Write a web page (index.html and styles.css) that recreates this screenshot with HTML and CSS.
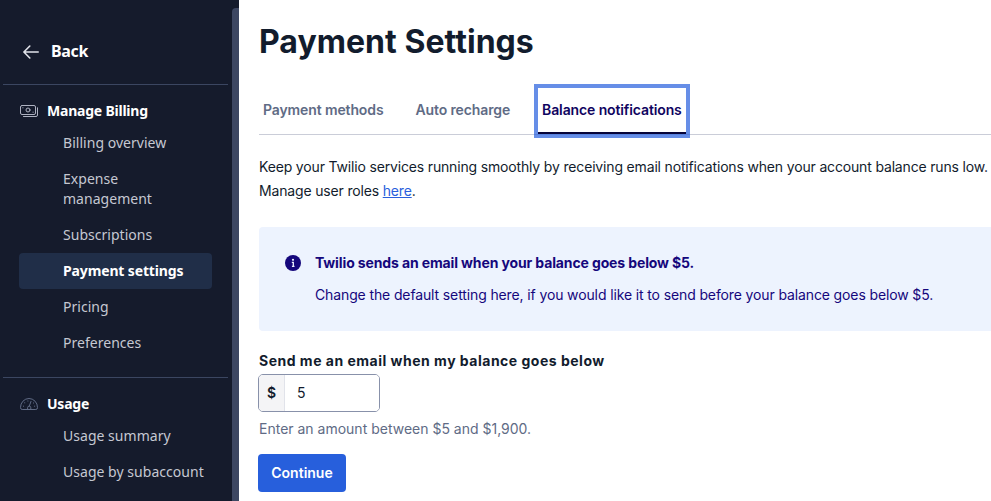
FILE: index.html
```html
<!DOCTYPE html>
<html lang="en">
<head>
    <meta charset="UTF-8">
    <meta name="viewport" content="width=device-width, initial-scale=1.0">
    <title>Payment Settings</title>
    <link rel="stylesheet" href="styles.css">
</head>
<body>
    <aside class="sidebar">
        <div class="sidebar-content">
            <a href="#" class="back">
                <svg class="back-icon" width="16" height="14" viewBox="0 0 16 14" fill="none" stroke="#e1e3ea" stroke-width="1.6" stroke-linecap="round" stroke-linejoin="round">
                    <path d="M15.2 7H1M6.8 1L0.9 7l5.9 6"/>
                </svg>
                <span>Back</span>
            </a>
            <nav class="nav-group billing">
                <h2 class="nav-title">
                    <svg class="nav-icon" width="18" height="12" viewBox="0 0 18 12" fill="none" stroke="#aeb2c1" stroke-linecap="round">
                        <rect x="0.5" y="0.5" width="15" height="9" rx="1.5"/>
                        <circle cx="8" cy="5" r="2"/>
                        <path d="M2.8 2.8h.2M13 7.2h.2M17.5 2.8v7.2q0 1.5-1.5 1.5H3.5"/>
                    </svg>
                    <span>Manage Billing</span>
                </h2>
                <a href="#">Billing overview</a>
                <a href="#">Expense<br>management</a>
                <a href="#">Subscriptions</a>
                <a href="#" class="active">Payment settings</a>
                <a href="#">Pricing</a>
                <a href="#">Preferences</a>
            </nav>
            <nav class="nav-group usage">
                <h2 class="nav-title">
                    <svg class="nav-icon" width="18" height="12" viewBox="0 0 18 12" fill="none" stroke="#606b85" stroke-linecap="round">
                        <path d="M1.8 11.5Q.5 11.5.5 9.5a8.5 9 0 0 1 17 0q0 2-1.3 2z"/>
                        <path d="M11 3.4L9.3 8M7.6 11v-1.3a1.6 1.6 0 0 1 3.2 0V11M3.4 8.2h.2M4.6 4.8h.2M7.8 3h.2M13.4 5h.2M14.5 8.2h.2"/>
                    </svg>
                    <span>Usage</span>
                </h2>
                <a href="#">Usage summary</a>
                <a href="#">Usage by subaccount</a>
            </nav>
        </div>
        <div class="scrollbar"></div>
    </aside>
    <main>
        <h1>Payment Settings</h1>
        <div class="tabs">
            <a href="#" class="tab">Payment methods</a>
            <a href="#" class="tab">Auto recharge</a>
            <a href="#" class="tab selected">Balance notifications</a>
        </div>
        <p class="intro">Keep your Twilio services running smoothly by receiving email notifications when your account balance runs low.<br>Manage user roles <a href="#">here</a>.</p>
        <div class="callout">
            <svg class="info-icon" width="16" height="16" viewBox="0 0 16 16">
                <circle cx="8" cy="8" r="8" fill="#15077c"/>
                <circle cx="8" cy="4.8" r="1.1" fill="#edf3fe"/>
                <path d="M6.8 7.3h1.5v4M6.9 11.4h2.6" fill="none" stroke="#edf3fe" stroke-width="1.3"/>
            </svg>
            <div>
                <h3>Twilio sends an email when your balance goes below $5.</h3>
                <p>Change the default setting here, if you would like it to send before your balance goes below $5.</p>
            </div>
        </div>
        <form>
            <label for="amount">Send me an email when my balance goes below</label>
            <div class="amount-box">
                <span class="prefix">$</span>
                <input type="text" id="amount" value="5">
            </div>
            <p class="help">Enter an amount between $5 and $1,900.</p>
            <button type="button" class="continue">Continue</button>
        </form>
    </main>
</body>
</html>
```

FILE: styles.css
```css
* {
    box-sizing: border-box;
}

body {
    margin: 0;
    display: flex;
    height: 501px;
    overflow: hidden;
    font-family: Inter, sans-serif;
    font-size: 14px;
    line-height: 24px;
    color: #121c2d;
    background-color: #fff;
}

h1, h2, h3, p {
    margin: 0;
}

.sidebar {
    width: 239px;
    flex-shrink: 0;
    display: flex;
    background-color: #151b2c;
    font-family: "Noto Sans", sans-serif;
    line-height: 20px;
}

.sidebar-content {
    width: 225px;
    margin: 0 4px 0 3px;
}

.sidebar a {
    text-decoration: none;
}

.scrollbar {
    width: 7px;
    margin-top: 8px;
    background-color: #3d4762;
    border-radius: 4px 0 0 0;
}

.back {
    display: flex;
    align-items: center;
    gap: 12px;
    height: 84px;
    padding: 19px 0 0 20px;
    color: #fff;
    font-size: 16px;
    font-weight: 700;
    letter-spacing: -0.3px;
}

.back span {
    margin-top: -2px;
}

.nav-group {
    border-top: 1px solid #3b4661;
    padding: 16px 16px 0;
}

.billing {
    height: 293px;
}

.nav-title {
    display: flex;
    align-items: center;
    gap: 9px;
    height: 20px;
    padding-left: 1px;
    color: #fff;
    font-size: 14px;
    font-weight: 700;
    letter-spacing: -0.22px;
}

.nav-title + a {
    margin-top: 4px;
}

.nav-group a {
    display: block;
    padding: 8px 0 8px 44px;
    color: #c5c8d2;
    font-size: 14px;
    letter-spacing: 0.03px;
}

.nav-group .active {
    color: #fff;
    font-weight: 700;
    letter-spacing: -0.14px;
    background-color: #202e48;
    border-radius: 4px;
}

main {
    flex: 1;
    min-width: 0;
    padding: 20px 0 0 20px;
}

h1 {
    font-size: 32px;
    line-height: 44px;
    font-weight: 700;
    letter-spacing: 0.04px;
}

.tabs {
    display: flex;
    gap: 24px;
    height: 51px;
    margin-top: 20px;
    border-bottom: 1px solid #cacdd8;
}

.tab {
    height: 51px;
    padding: 14px 4px 0;
    color: #606b85;
    font-weight: 600;
    letter-spacing: -0.12px;
    text-decoration: none;
    white-space: nowrap;
}

.tab.selected {
    height: 46px;
    margin-top: 4px;
    padding-top: 10px;
    color: #0f0460;
    border-bottom: 2px solid #06033a;
    box-shadow: 0 0 0 4px rgba(37, 94, 221, 0.7);
}

.intro {
    margin-top: 20px;
    letter-spacing: -0.165px;
    white-space: nowrap;
}

.intro a {
    color: #2a5fdc;
}

.callout {
    display: flex;
    gap: 14px;
    height: 104px;
    margin-top: 24px;
    padding: 24px 0 0 26px;
    color: #15077c;
    background-color: #edf3fe;
    border-radius: 4px 0 0 4px;
    letter-spacing: -0.125px;
}

.info-icon {
    margin-top: 4px;
}

.callout h3 {
    font-size: 14px;
    font-weight: 700;
}

.callout p {
    margin-top: 8px;
}

label {
    display: block;
    margin-top: 20px;
    line-height: 20px;
    font-weight: 700;
    letter-spacing: 0.5px;
}

.amount-box {
    display: flex;
    width: 122px;
    height: 38px;
    margin: 3px 0 0 -1px;
    border: 1px solid #8891aa;
    border-radius: 5px;
    overflow: hidden;
}

.prefix {
    width: 26px;
    line-height: 36px;
    text-align: center;
    font-weight: 600;
    background-color: #f4f4f6;
    border-right: 1px solid #e1e3ea;
}

.amount-box input {
    width: 94px;
    padding: 0 12px;
    border: none;
    outline: none;
    color: #121c2d;
    font: inherit;
}

.help {
    margin-top: 5px;
    color: #606b85;
}

.continue {
    display: block;
    width: 88px;
    height: 38px;
    margin: 13px 0 0 -1px;
    padding: 0;
    border: none;
    border-radius: 4px;
    color: #fff;
    background-color: #275fdc;
    font: inherit;
    font-weight: 600;
    cursor: pointer;
}
```
